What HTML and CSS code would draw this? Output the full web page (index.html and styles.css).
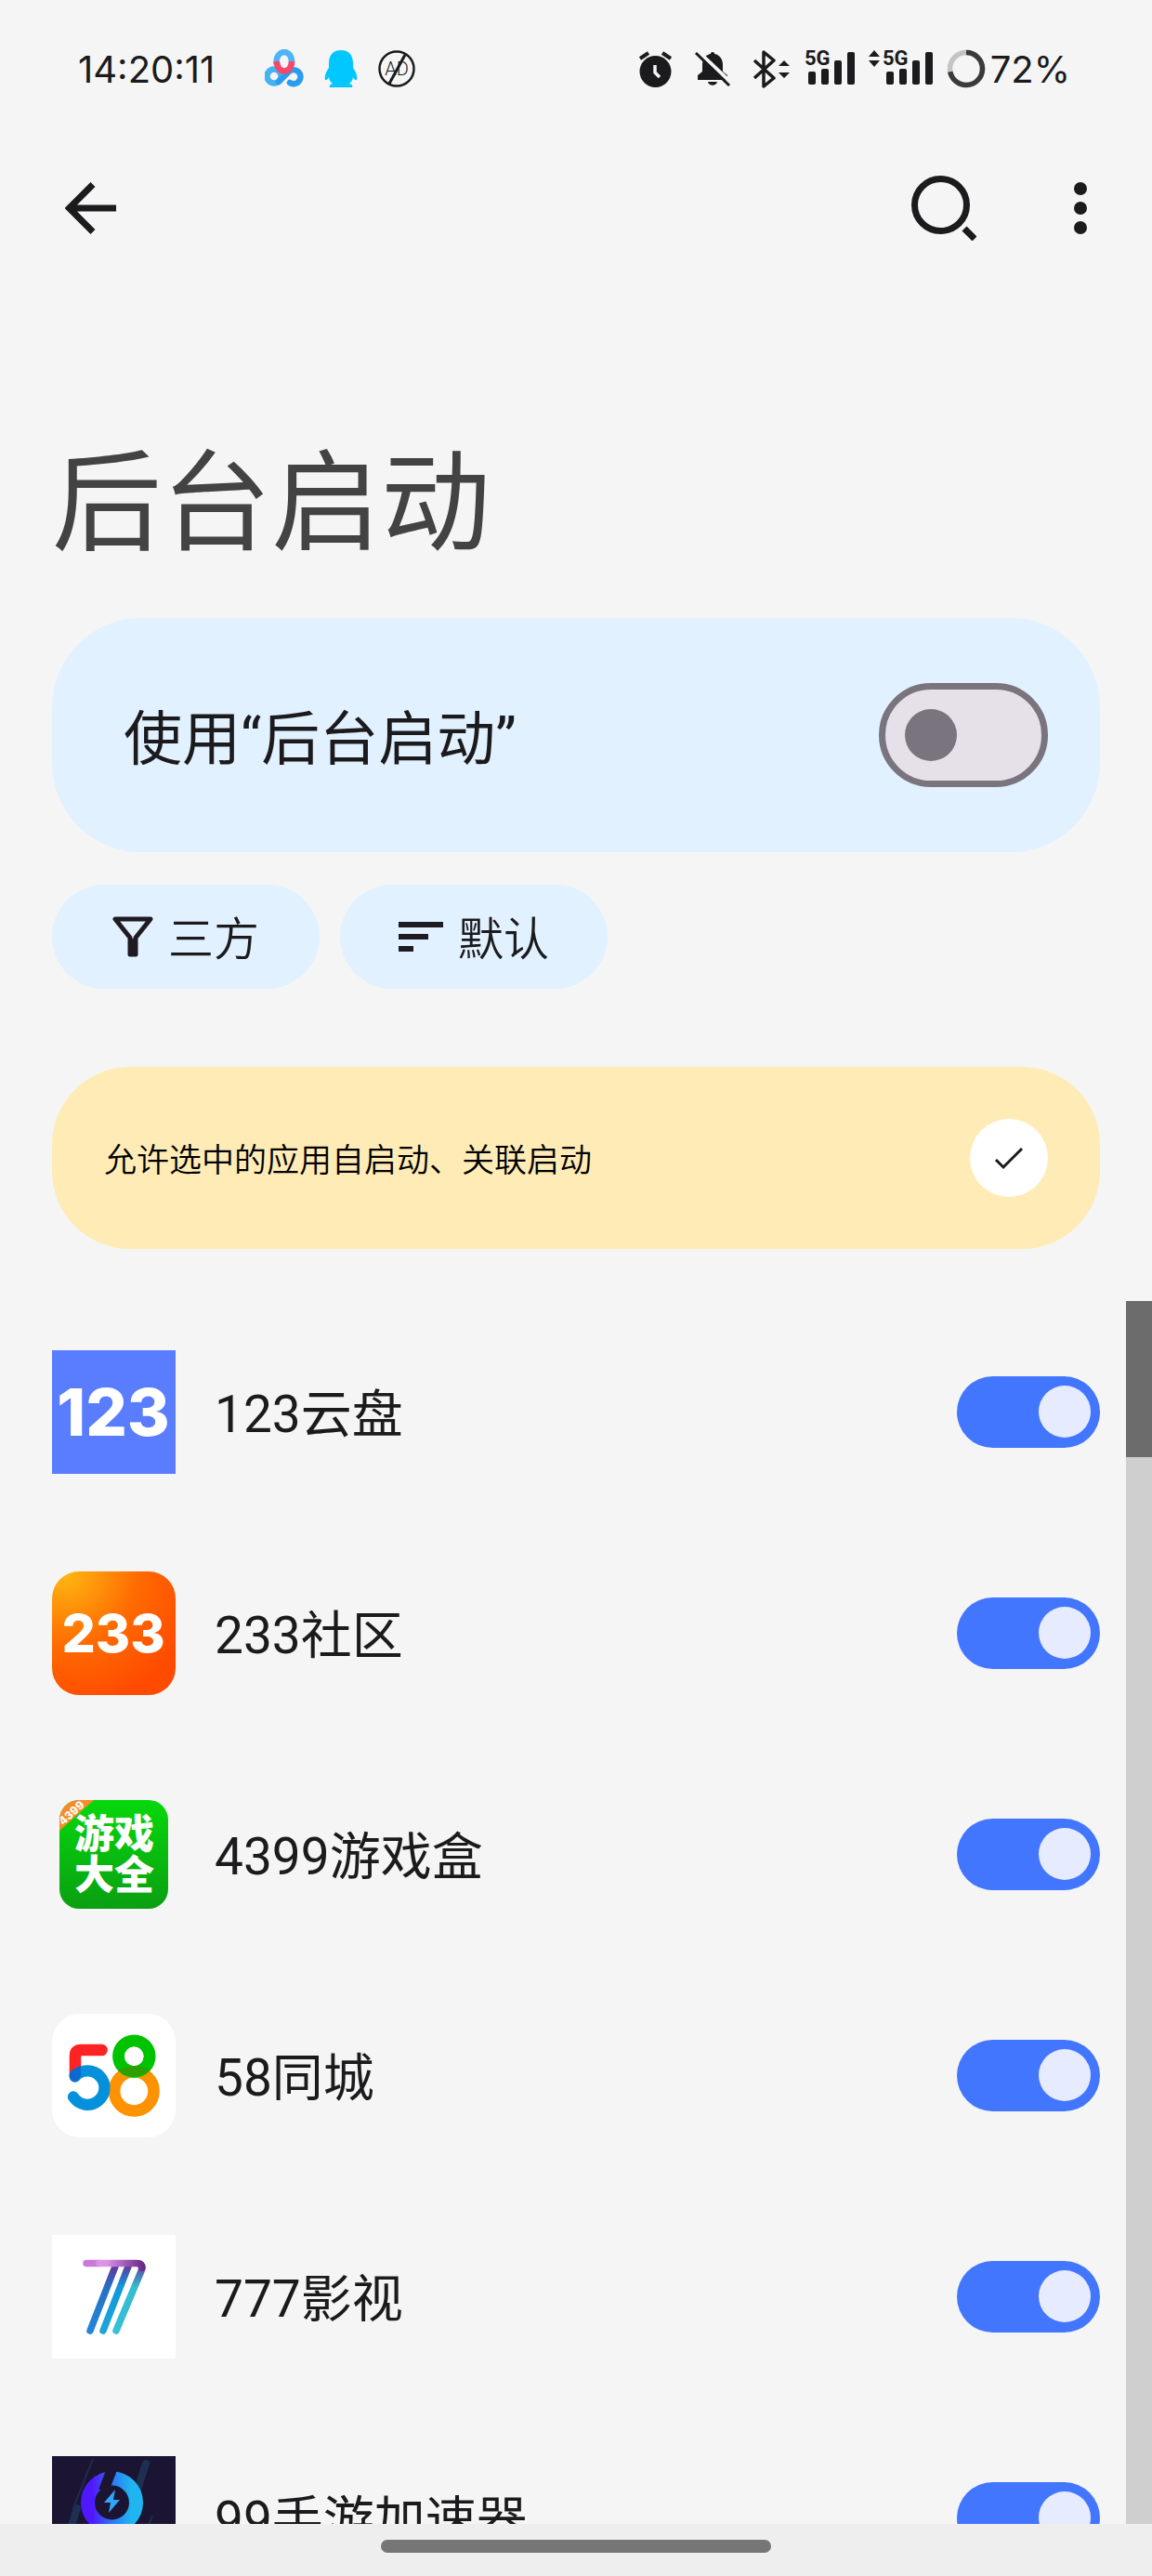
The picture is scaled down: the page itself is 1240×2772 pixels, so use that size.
FILE: index.html
```html
<!DOCTYPE html>
<html lang="zh-CN">
<head>
  <meta charset="UTF-8" />
  <meta name="viewport" content="width=device-width, initial-scale=1" />
  <title>后台启动</title>
  <link rel="stylesheet" href="styles.css">
</head>
<body>
  <div class="status-bar">
    <div class="status-bar__left">
      <span class="status-bar__time">14:20:11</span>
      <div class="status-bar__apps">
        <svg width="42" height="42" viewBox="0 0 42 42" fill="none" stroke-width="6.500" stroke-linecap="round">
          <circle cx="10" cy="29" r="7.500" stroke="#45b2f2"/>
          <path d="M15 35 26 24A7.500 7.500 0 1 1 27 36" stroke="#2a9df0"/>
          <path d="M12.500 15C12 -1 30 -1 29 15" stroke="#4fb4f5"/>
          <path d="M13 13C13 27 29 27 29 13" stroke="#f7476b" stroke-linecap="butt"/>
        </svg>
        <svg width="36" height="42" viewBox="0 0 36 42" fill="#00c8ff">
          <path d="M18 1C9 1 5 7 5 15v5C2 24 0 29 1 33c1 1 3-1 4-3 0 3 2 5 4 7-3 1-4 2-3 4h24c1-2 0-3-3-4 2-2 4-4 4-7 1 2 3 4 4 3 1-4-1-9-4-13v-5C31 7 27 1 18 1z"/>
        </svg>
        <svg width="40" height="42" viewBox="0 0 40 42" fill="none" stroke="#1b1b1d">
          <circle cx="20" cy="21" r="18.500" stroke-width="2.500"/>
          <path d="M29 6 12 37" stroke-width="3"/>
          <text x="20" y="28" class="ad-text">AD</text>
        </svg>
      </div>
    </div>
    <div class="status-bar__right">
      <div class="status-bar__icons">
        <svg width="37" height="42" viewBox="0 0 37 42" fill="none" stroke="#1b1b1d">
          <circle cx="18.500" cy="24" r="17" fill="#1b1b1d" stroke="none"/>
          <path d="M2 10 11 4M35 10 26 4" stroke-width="4"/>
          <path d="M18 17v8l5 5" stroke="#f5f5f5" stroke-width="3.500"/>
        </svg>
        <svg width="38" height="42" viewBox="0 0 38 42">
          <path d="M19 3c2 0 2 1 2 2 6 1 9 6 9 12v7l5 4v5H3v-5l5-4v-7c0-6 3-11 9-12 0-1 0-2 2-2zM14 35h10c-1 5-9 5-10 0z" fill="#1b1b1d"/>
          <path d="M2 1 40 37" stroke="#f5f5f5" stroke-width="4"/>
          <path d="M1 4 37 39" stroke="#1b1b1d" stroke-width="3"/>
        </svg>
        <svg width="40" height="42" viewBox="0 0 40 42">
          <path d="M2 12 23 31 12 40V3l11 9L2 31" fill="none" stroke="#1b1b1d" stroke-width="3.500" stroke-linejoin="round"/>
          <path d="M28 18h12l-6-6zM28 25h12l-6 6z" fill="#1b1b1d"/>
        </svg>
      </div>
      <div class="status-bar__signals">
        <svg width="56" height="58" viewBox="0 -8 56 58" fill="#1b1b1d">
          <text x="0" y="17" class="net-text">5G</text>
          <rect x="4" y="24" width="8" height="14" rx="2"/>
          <rect x="18" y="21" width="8" height="17" rx="2"/>
          <rect x="32" y="12" width="8" height="26" rx="2"/>
          <rect x="46" y="3" width="8" height="35" rx="2"/>
        </svg>
        <svg width="71" height="58" viewBox="0 -8 71 58" fill="#1b1b1d">
          <path d="M0 8h12L6 1zM0 12h12l-6 7z"/>
          <text x="15" y="17" class="net-text">5G</text>
          <rect x="19" y="24" width="8" height="14" rx="2"/>
          <rect x="33" y="21" width="8" height="17" rx="2"/>
          <rect x="47" y="12" width="8" height="26" rx="2"/>
          <rect x="61" y="3" width="8" height="35" rx="2"/>
        </svg>
        <div class="battery">
          <svg width="42" height="42" viewBox="0 0 42 42" fill="none" stroke-width="5.500">
            <circle cx="21" cy="21" r="17.500" stroke="#c4c4c4"/>
            <circle cx="21" cy="21" r="17.500" stroke="#3a3a3c" pathLength="100" stroke-dasharray="72 28" transform="rotate(-90 21 21)"/>
          </svg>
          <span>72%</span>
        </div>
      </div>
    </div>
  </div>

  <header class="toolbar">
    <button class="icon-btn" aria-label="返回">
      <svg width="56" height="56" viewBox="0 0 56 56" fill="none" stroke="#1b1b1d" stroke-width="7">
        <path d="M55 28H6M30 2.500 4.500 28 30 53.500"/>
      </svg>
    </button>
    <div class="toolbar__actions">
      <button class="icon-btn" aria-label="搜索">
        <svg width="70" height="70" viewBox="0 0 70 70" fill="none" stroke="#1b1b1d" stroke-width="7">
          <circle cx="31.500" cy="31.500" r="28"/>
          <path d="M57 57 68 68"/>
        </svg>
      </button>
      <button class="icon-btn" aria-label="更多">
        <svg width="14" height="56" viewBox="0 0 14 56" fill="#1b1b1d">
          <circle cx="7" cy="7" r="7"/>
          <circle cx="7" cy="28" r="7"/>
          <circle cx="7" cy="49" r="7"/>
        </svg>
      </button>
    </div>
  </header>

  <main class="page">
    <h1 class="page__title">后台启动</h1>

    <div class="master">
      <label class="master__label" for="master">使用“后台启动”</label>
      <input type="checkbox" id="master" class="master__switch" />
    </div>

    <div class="chips">
      <button class="chip">
        <svg width="44" height="44" viewBox="0 0 44 44" fill="none" stroke="#1f1b22" stroke-width="5" stroke-linejoin="round">
          <path d="M3 3h38L25 23v18h-6V23z"/>
          <path d="M22 24v16" />
        </svg>
        <span class="chip__text">三方</span>
      </button>
      <button class="chip">
        <svg width="48" height="44" viewBox="0 0 48 44" fill="#1f1b22">
          <path d="M0 6h48v6H0zM0 19h32v6H0zM0 32h16v6H0z"/>
        </svg>
        <span class="chip__text">默认</span>
      </button>
    </div>

    <div class="tip">
      <p class="tip__text">允许选中的应用自启动、关联启动</p>
      <button class="tip__ok" aria-label="知道了">
        <svg width="32" height="28" viewBox="0 0 32 28" fill="none" stroke="#1b1b1d" stroke-width="3">
          <path d="M2 16 10 24 30 4"/>
        </svg>
      </button>
    </div>
  </main>

  <section class="list-wrap">
    <ul class="apps">
      <li class="app">
        <svg class="app__icon" viewBox="0 0 133 133">
          <rect width="133" height="133" fill="#5a7dff"/>
          <text x="66" y="92" class="logo-123">123</text>
        </svg>
        <label class="app__name" for="app1">123云盘</label>
        <input type="checkbox" id="app1" class="app__switch" checked />
      </li>
      <li class="app">
        <svg class="app__icon" viewBox="0 0 133 133">
          <defs>
            <radialGradient id="g233" cx="0.1" cy="0" r="1.1">
              <stop offset="0" stop-color="#ffb914"/>
              <stop offset="0.55" stop-color="#ff6a00"/>
              <stop offset="1" stop-color="#ff4b00"/>
            </radialGradient>
          </defs>
          <rect width="133" height="133" rx="29" fill="url(#g233)"/>
          <text x="66" y="87" class="logo-233">233</text>
        </svg>
        <label class="app__name" for="app2">233社区</label>
        <input type="checkbox" id="app2" class="app__switch" checked />
      </li>
      <li class="app">
        <svg class="app__icon" viewBox="0 0 133 133">
          <defs>
            <linearGradient id="g4399" x1="0" y1="0" x2="0" y2="1">
              <stop offset="0" stop-color="#06d80c"/>
              <stop offset="1" stop-color="#0a9f12"/>
            </linearGradient>
            <clipPath id="c4399"><rect x="8" y="8" width="117" height="117" rx="21"/></clipPath>
          </defs>
          <g clip-path="url(#c4399)">
            <rect x="8" y="8" width="117" height="117" fill="url(#g4399)"/>
            <path d="M8 8h37L8 41z" fill="#f58d28"/>
            <text x="21" y="26" class="logo-4399" transform="rotate(-42 21 22)">4399</text>
          </g>
          <text x="67" y="60" class="logo-game">游戏</text>
          <text x="67" y="104" class="logo-game">大全</text>
        </svg>
        <label class="app__name" for="app3">4399游戏盒</label>
        <input type="checkbox" id="app3" class="app__switch" checked />
      </li>
      <li class="app">
        <svg class="app__icon" viewBox="0 0 133 133" fill="none">
          <rect width="133" height="133" rx="30" fill="#fff"/>
          <circle cx="88.300" cy="83.300" r="21.200" stroke="#ff9200" stroke-width="12.600"/>
          <circle cx="88.300" cy="45.700" r="16.700" stroke="#00c300" stroke-width="13"/>
          <path d="M71 61Q88 74 106 61Q88 51 71 61z" fill="#2da000"/>
          <circle cx="88.300" cy="45.700" r="10.200" fill="#fff"/>
          <path d="M53.500 39H31q-6 0-6 6v22" stroke="#ff2323" stroke-width="12.600" stroke-linecap="round"/>
          <path d="M24.700 67.500A18.200 18.200 0 1 1 23 89.500" stroke="#0590dc" stroke-width="12.300" stroke-linecap="round"/>
          <path d="M19 63q5-5 12-7v11q-5 8-10 5-3-3-2-9z" fill="#0b68cf"/>
        </svg>
        <label class="app__name" for="app4">58同城</label>
        <input type="checkbox" id="app4" class="app__switch" checked />
      </li>
      <li class="app">
        <svg class="app__icon" viewBox="0 0 133 133" fill="none" stroke-width="7.500" stroke-linecap="round">
          <defs>
            <linearGradient id="g7a" gradientUnits="userSpaceOnUse" x1="0" y1="30" x2="0" y2="104">
              <stop offset="0" stop-color="#6a2f93"/>
              <stop offset="0.35" stop-color="#2670c4"/>
              <stop offset="1" stop-color="#2487d6"/>
            </linearGradient>
            <linearGradient id="g7b" gradientUnits="userSpaceOnUse" x1="0" y1="30" x2="0" y2="104">
              <stop offset="0" stop-color="#6a2f93"/>
              <stop offset="0.35" stop-color="#0f98dc"/>
              <stop offset="1" stop-color="#1fa5d8"/>
            </linearGradient>
            <linearGradient id="g7c" gradientUnits="userSpaceOnUse" x1="0" y1="30" x2="0" y2="104">
              <stop offset="0" stop-color="#6a2f93"/>
              <stop offset="0.35" stop-color="#33bdd0"/>
              <stop offset="1" stop-color="#38c0d4"/>
            </linearGradient>
            <linearGradient id="g7t" gradientUnits="userSpaceOnUse" x1="60" y1="0" x2="98" y2="0">
              <stop offset="0" stop-color="#d78be4"/>
              <stop offset="1" stop-color="#6a2a8a"/>
            </linearGradient>
          </defs>
          <rect width="133" height="133" fill="#fff"/>
          <path d="M68 34 41 103" stroke="url(#g7a)"/>
          <path d="M82 34 55 103" stroke="url(#g7b)"/>
          <path d="M94 31q4 2 2 8L69 103" stroke="url(#g7c)"/>
          <path d="M37 30.500h14" stroke="#c97ad8"/>
          <path d="M51 30.500h14" stroke="#dc93e6"/>
          <path d="M65 30.500H91q6 0 6 5" stroke="url(#g7t)"/>
        </svg>
        <label class="app__name" for="app5">777影视</label>
        <input type="checkbox" id="app5" class="app__switch" checked />
      </li>
      <li class="app">
        <svg class="app__icon" viewBox="0 0 133 133" fill="none">
          <defs>
            <linearGradient id="g99" x1="0" y1="0" x2="1" y2="0">
              <stop offset="0.1" stop-color="#5018ff"/>
              <stop offset="0.5" stop-color="#2e78f8"/>
              <stop offset="0.9" stop-color="#1eb5f0"/>
            </linearGradient>
          </defs>
          <rect width="133" height="133" fill="#1b1533"/>
          <path d="M101 8 92 36M27 56 16 90" stroke="#1d3052" stroke-width="8" stroke-linecap="round"/>
          <path d="M44 3 22 58M108 64 98 90" stroke="#1d2c4b" stroke-width="2"/>
          <circle cx="64.500" cy="50" r="26" stroke="url(#g99)" stroke-width="15"/>
          <path d="M60 10h12L62 36H50z" fill="#1b1533"/>
          <path d="M68 36 56 50h7l-2 11 12-14h-7z" fill="#2fa5fa"/>
        </svg>
        <label class="app__name" for="app6">99手游加速器</label>
        <input type="checkbox" id="app6" class="app__switch" checked />
      </li>
    </ul>
    <div class="scrollbar"><div class="scrollbar__thumb"></div></div>
  </section>

  <footer class="nav-bar"><div class="nav-bar__pill"></div></footer>
</body>
</html>
```
FILE: styles.css
```css
* {
  box-sizing: border-box;
}
body {
  margin: 0;
  height: 100vh;
  display: flex;
  flex-direction: column;
  overflow: hidden;
  background: #f5f5f5;
  color: #1b1b1d;
  font-family: Roboto, "Noto Sans CJK SC", sans-serif;
}
button {
  border: none;
  padding: 0;
  color: inherit;
  font-family: inherit;
  cursor: pointer;
}
svg {
  display: block;
  flex: none;
}

/* status bar */
.status-bar {
  height: 148px;
  flex: none;
  display: flex;
  justify-content: space-between;
  align-items: center;
  padding: 0 88px 0 84px;
  font-family: Inter, sans-serif;
  font-size: 40px;
}
.status-bar__left {
  display: flex;
  align-items: center;
  gap: 54px;
}
.status-bar__apps {
  display: flex;
  gap: 22px;
}
.status-bar__right {
  display: flex;
  align-items: center;
  gap: 16px;
}
.status-bar__icons {
  display: flex;
  gap: 24px;
}
.status-bar__signals {
  display: flex;
  align-items: center;
  gap: 13px;
}
.battery {
  display: flex;
  align-items: center;
  gap: 5px;
}
.net-text {
  font: 700 22px Roboto, sans-serif;
}
.ad-text {
  font: 300 20px Roboto, sans-serif;
  text-anchor: middle;
  fill: #1b1b1d;
  stroke: none;
}

/* toolbar */
.toolbar {
  height: 152px;
  flex: none;
  display: flex;
  justify-content: space-between;
  align-items: center;
  padding: 0 70px;
}
.toolbar__actions {
  display: flex;
  align-items: center;
  gap: 105px;
}
.icon-btn {
  background: none;
}

/* top part of the page */
.page {
  flex: none;
  padding: 173px 56px 56px;
}
.page__title {
  margin: 0 0 52px;
  font-size: 118px;
  line-height: 140px;
  font-weight: 400;
  color: #434343;
}
.master {
  display: flex;
  justify-content: space-between;
  align-items: center;
  min-height: 252px;
  padding: 0 56px 0 77px;
  border-radius: 96px;
  background: #e2f1ff;
  font-size: 63px;
}
.master__label,
.chip__text,
.app__name {
  padding-bottom: 4px;
}
.master__switch {
  appearance: none;
  display: flex;
  align-items: center;
  width: 182px;
  height: 112px;
  margin: 0;
  padding-left: 21px;
  border: 7px solid #79747e;
  border-radius: 56px;
  background: #e6e0e9;
}
.master__switch::before {
  content: "";
  width: 56px;
  height: 56px;
  border-radius: 50%;
  background: #79747e;
}
.chips {
  display: flex;
  gap: 22px;
  margin: 35px 0 84px;
}
.chip {
  display: flex;
  justify-content: center;
  align-items: center;
  gap: 16px;
  width: 288px;
  height: 112px;
  border-radius: 56px;
  background: #e2f1ff;
  font-size: 49px;
  font-weight: 350;
}
.tip {
  display: flex;
  justify-content: space-between;
  align-items: center;
  min-height: 196px;
  padding: 0 56px;
  border-radius: 84px;
  background: #ffebb5;
  color: #000;
  font-size: 35px;
  font-weight: 350;
}
.tip__text {
  margin: 0;
  padding-bottom: 2px;
}
.tip__ok {
  display: flex;
  justify-content: center;
  align-items: center;
  width: 84px;
  height: 84px;
  border-radius: 50%;
  background: #fff;
}

/* app list */
.list-wrap {
  flex: 1;
  min-height: 0;
  display: flex;
}
.apps {
  flex: 1;
  margin: 0;
  padding: 0 28px 0 56px;
  list-style: none;
  overflow: hidden;
}
.app {
  display: flex;
  align-items: center;
  height: 238px;
}
.app__icon {
  width: 133px;
  height: 133px;
}
.app__name {
  flex: 1;
  margin-left: 42px;
  font-size: 55px;
}
.app__switch {
  appearance: none;
  display: flex;
  justify-content: flex-end;
  align-items: center;
  width: 154px;
  height: 77px;
  margin: 0;
  padding: 0 10px;
  border-radius: 39px;
  background: #4276ff;
}
.app__switch::before {
  content: "";
  width: 56px;
  height: 56px;
  border-radius: 50%;
  background: #e6ebff;
}
.app__switch:not(:checked) {
  justify-content: flex-start;
  background: #c8c8c8;
}
.logo-123,
.logo-233,
.logo-4399,
.logo-game {
  fill: #fff;
  text-anchor: middle;
  font-family: Inter, sans-serif;
  font-weight: 800;
}
.logo-123 {
  font-size: 70px;
}
.logo-233 {
  font-size: 57px;
}
.logo-4399 {
  font-size: 12px;
}
.logo-game {
  font-family: "Noto Sans CJK SC", sans-serif;
  font-weight: 900;
  font-size: 43px;
}

.scrollbar {
  width: 28px;
  background: #cfcfcf;
}
.scrollbar__thumb {
  height: 168px;
  background: #6c6c6c;
}

/* gesture bar */
.nav-bar {
  flex: none;
  height: 56px;
  display: flex;
  justify-content: center;
  align-items: center;
  padding-bottom: 8px;
  background: #eee;
}
.nav-bar__pill {
  width: 420px;
  height: 14px;
  border-radius: 7px;
  background: #767676;
}
```
